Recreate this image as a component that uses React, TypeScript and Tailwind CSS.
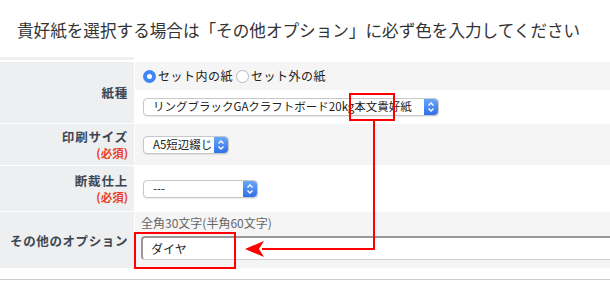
const JP = { fontFamily: '"Noto Sans CJK JP", "Noto Sans", sans-serif' }

function Stepper() {
  return (
    <span className="flex h-full w-[14px] items-center justify-center rounded-r-[4px] bg-gradient-to-b from-[#6aa6f8] to-[#2f6fe8]">
      <svg width="8" height="12" viewBox="0 0 8 12" fill="none" stroke="white" strokeWidth="1.4">
        <path d="M1.5 4.5 L4 2 L6.5 4.5" />
        <path d="M1.5 7.5 L4 10 L6.5 7.5" />
      </svg>
    </span>
  )
}

function FakeSelect({ label, width }: { label: string; width: string }) {
  return (
    <div className={`flex h-[18px] items-stretch rounded-[4px] border border-[#c8c8c8] bg-white shadow-[0_1px_1px_rgba(0,0,0,0.08)] ${width}`}>
      <span className="flex flex-1 items-center whitespace-nowrap pl-[9px] text-[11.5px] leading-none text-[#222]">{label}</span>
      <Stepper />
    </div>
  )
}

function Label({ title, required }: { title: string; required?: boolean }) {
  return (
    <div className="flex w-[134px] shrink-0 flex-col items-end justify-center bg-[#edeff1] pr-[6px] font-bold">
      <span className="text-[12.5px] leading-[17px] tracking-[0.8px] text-[#3d4650]">{title}</span>
      {required && <span className="mt-[1px] text-[11.5px] leading-[15px] text-[#e8402c]">(必須)</span>}
    </div>
  )
}

export default function App() {
  return (
    <div className="relative h-[286px] w-[610px] overflow-hidden bg-white" style={JP}>
      <h1 className="whitespace-nowrap px-[17px] pt-[19px] text-[16.6px] leading-[22px] text-[#333]">
        貴好紙を選択する場合は「その他オプション」に必ず色を入力してください
      </h1>

      <div className="mt-[16px] flex h-[3px] gap-[1px]">
        <div className="w-[134px] bg-[#eef0f2]" />
      </div>

      <div className="mt-[2px] flex flex-col gap-[1px]">
        {/* 紙種 */}
        <div className="flex h-[61px] gap-[1px]">
          <Label title="紙種" />
          <div className="flex flex-1 flex-col">
            <div className="flex h-[28px] items-center whitespace-nowrap bg-[#f5f5f5] pl-[8px] text-[12px] text-[#222]">
              <span className="flex h-[13px] w-[13px] items-center justify-center rounded-full bg-[#3f86f4]">
                <span className="h-[5px] w-[5px] rounded-full bg-white" />
              </span>
              <span className="ml-[2px] tracking-[0.5px]">セット内の紙</span>
              <span className="ml-[3px] h-[13px] w-[13px] rounded-full border border-[#b8b8b8] bg-white" />
              <span className="ml-[2px] tracking-[0.5px]">セット外の紙</span>
            </div>
            <div className="flex flex-1 items-center bg-white pl-[8px]">
              <FakeSelect label="リングブラックGAクラフトボード20kg本文貴好紙" width="w-[296px]" />
            </div>
          </div>
        </div>

        {/* 印刷サイズ */}
        <div className="flex h-[41px] gap-[1px]">
          <Label title="印刷サイズ" required />
          <div className="flex flex-1 items-center bg-[#f5f5f5] pl-[8px]">
            <FakeSelect label="A5短辺綴じ" width="w-[86px]" />
          </div>
        </div>

        {/* 断裁仕上 */}
        <div className="flex h-[45px] gap-[1px]">
          <Label title="断裁仕上" required />
          <div className="flex flex-1 items-center bg-white pl-[8px]">
            <FakeSelect label="---" width="w-[115px]" />
          </div>
        </div>

        {/* その他のオプション */}
        <div className="flex h-[56px] gap-[1px]">
          <div className="flex w-[134px] shrink-0 items-center justify-end whitespace-nowrap bg-[#edeff1] pr-[6px] pt-[2px] text-[12.5px] font-bold tracking-[0.6px] text-[#3d4650]">
            その他のオプション
          </div>
          <div className="flex flex-1 flex-col bg-[#f5f5f5] pl-[6px]">
            <span className="whitespace-nowrap pt-[2px] text-[12px] leading-[18px] text-[#666]">全角30文字(半角60文字)</span>
            <div className="mt-[4px] flex h-[24px] items-center rounded-l-[4px] border-l-[2px] border-t-[2px] border-b border-[#9a9a9a] border-b-[#d0d0d0] bg-white pl-[8px] text-[12px] text-[#222]">
              ダイヤ
            </div>
          </div>
        </div>
      </div>

      <div className="mt-[11px] h-[1px] bg-[#cccccc]" />

      {/* annotations */}
      <div className="absolute left-[349px] top-[93px] h-[28px] w-[46px] border-[2px] border-[#f00]" />
      <div className="absolute left-[134px] top-[232px] h-[37px] w-[102px] border-[2px] border-[#f00]" />
      <svg className="absolute left-0 top-0" width="610" height="286">
        <polyline points="374,121 374,249 262,249" fill="none" stroke="#f00" strokeWidth="2" />
        <polygon points="245,249 264,241 259,249 264,257" fill="#f00" />
      </svg>
    </div>
  )
}
